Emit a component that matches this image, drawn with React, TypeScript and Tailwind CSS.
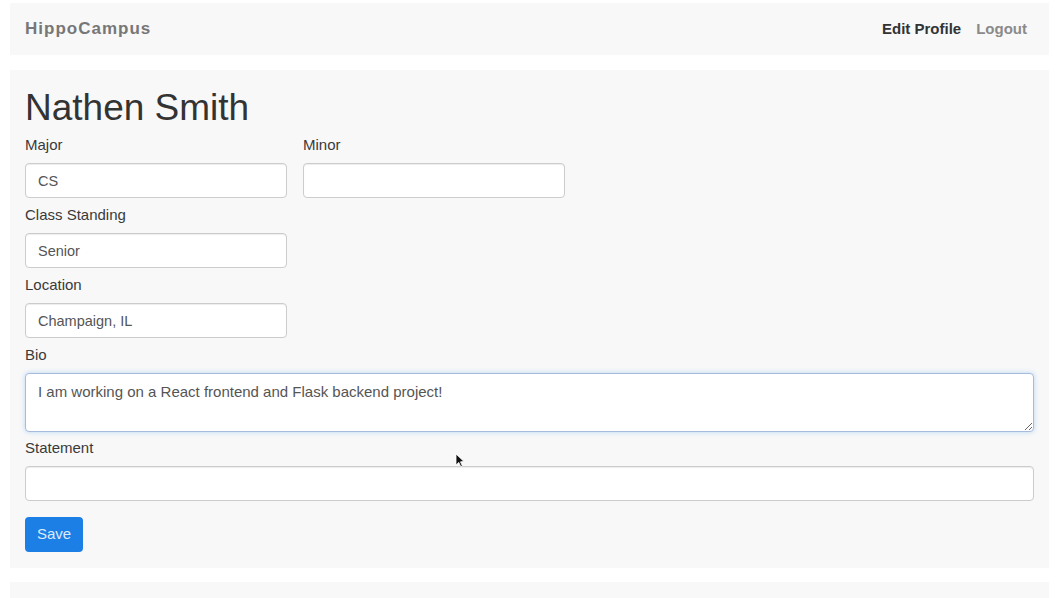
import React from "react";

const font = { fontFamily: '"Liberation Sans", Arial, sans-serif' };

type FieldProps = {
  label: string;
  value?: string;
  width?: string;
};

const Field: React.FC<FieldProps> = ({ label, value = "", width = "w-[262px]" }) => {
  return (
    <div className="flex flex-col">
      <label className="text-[15px] leading-[18px] text-[#3a3a3a] mb-[9px]">{label}</label>
      <input
        readOnly
        value={value}
        className={`${width} h-[35px] mb-[8px] px-[12px] text-[14.5px] text-[#555] bg-white border border-[#ccc] rounded-[4px] shadow-[inset_0_1px_1px_rgba(0,0,0,0.075)] outline-none`}
      />
    </div>
  );
};

export default function App() {
  return (
    <div className="min-h-[598px] bg-white relative overflow-hidden" style={font}>
      <nav className="mt-[3px] ml-[10px] mr-[12px] h-[52px] bg-[#f8f8f9] flex items-center justify-between pl-[15px] pr-[22px]">
        <span className="text-[17px] font-bold text-[#777] tracking-[1px]">HippoCampus</span>
        <div className="flex items-center gap-[15px] text-[15px] font-bold">
          <span className="text-[#333]">Edit Profile</span>
          <span className="text-[#8a8a8a]">Logout</span>
        </div>
      </nav>

      <main className="mt-[15px] ml-[10px] mr-[12px] bg-[#f8f8f9] px-[15px] pt-[18px] pb-[16px]">
        <h1 className="text-[37px] leading-[40px] text-[#333] mb-[8px]">Nathen Smith</h1>

        <div className="flex gap-[16px]">
          <Field label="Major" value="CS" />
          <Field label="Minor" />
        </div>
        <Field label="Class Standing" value="Senior" />
        <Field label="Location" value="Champaign, IL" />

        <div className="flex flex-col">
          <label className="text-[15px] leading-[18px] text-[#3a3a3a] mb-[9px]">Bio</label>
          <textarea
            readOnly
            value="I am working on a React frontend and Flask backend project!"
            className="w-full h-[59px] mb-[7px] px-[12px] pt-[7px] text-[15px] text-[#555] bg-white border border-[#a9bbdd] rounded-[4px] shadow-[0_0_5px_rgba(102,175,233,0.45)] outline-none"
          />
        </div>

        <div className="flex flex-col">
          <label className="text-[15px] leading-[18px] text-[#3a3a3a] mb-[9px]">Statement</label>
          <input
            readOnly
            value=""
            className="w-full h-[35px] px-[12px] text-[14px] text-[#555] bg-white border border-[#ccc] rounded-[4px] shadow-[inset_0_1px_1px_rgba(0,0,0,0.075)] outline-none"
          />
        </div>

        <button className="mt-[16px] w-[58px] h-[35px] rounded-[4px] bg-[#1c7fe6] text-[15px] text-[#dcebfb]">
          Save
        </button>
      </main>

      <div className="mt-[14px] ml-[10px] mr-[12px] h-[20px] bg-[#f8f8f9]" />

      <svg className="absolute left-[455px] top-[453px]" width="10" height="15" viewBox="0 0 10 15">
        <path d="M1 1 L1 12 L3.8 9.4 L5.8 13.8 L7.4 13.1 L5.5 8.8 L9 8.6 Z" fill="#111" stroke="#fff" strokeWidth="0.8" />
      </svg>
    </div>
  );
}
